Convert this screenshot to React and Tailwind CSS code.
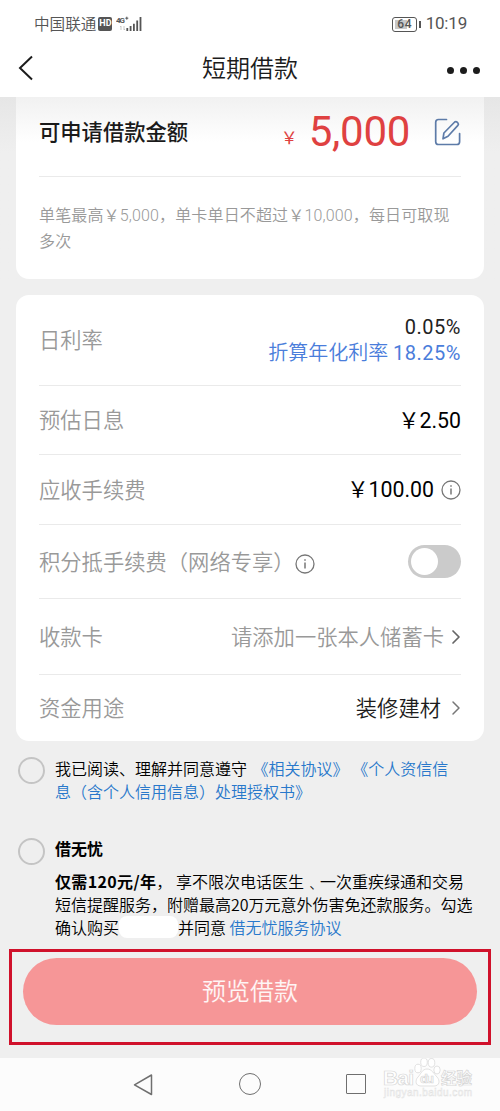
import { ChevronRight } from "lucide-react";

const StatusBar = () => (
  <div className="flex h-12 items-center justify-between pl-[34px] pr-[33px] text-[#555]">
    <div className="flex items-center">
      <span className="text-[15.6px] font-[350]">中国联通</span>
      <span className="ml-[2px] flex h-[14px] w-[14px] items-center justify-center rounded-[2px] bg-[#555] font-[Roboto] text-[9px] font-bold text-white">
        HD
      </span>
      <svg className="ml-1 h-4 w-[27px]" viewBox="0 0 27 16">
        <text x="0" y="7" fontSize="8" fontWeight="700" fontFamily="Roboto" fill="#555" textLength="9">4G</text>
        <path d="M10.8 .7v3M9.3 2.2h3" stroke="#555" strokeWidth="1" />
        <path d="M5 14v-4M4 11l1-1M8 10v4M9 13l-1 1" stroke="#bbb" strokeWidth=".8" fill="none" />
        <path d="M11.3 15v-3M14.6 15v-5M17.9 15V7.700M21.200 15V4.500M24.500 15V1" stroke="#555" strokeWidth="1.800" />
      </svg>
    </div>
    <div className="flex items-center">
      <div className="flex h-[15px] w-[25px] items-center justify-center rounded-[3px] border border-[#555] p-[2px]">
        <span className="flex h-full w-full items-center justify-center bg-gradient-to-r from-[#c8c8c8] from-65% to-white to-65% font-[Roboto] text-[12px] leading-none font-medium tracking-[0.5px]">
          64
        </span>
      </div>
      <span className="ml-[2px] h-[7px] w-[1.5px] bg-[#555]" />
      <span className="ml-[5px] font-[Roboto] text-[17px] tracking-[-0.2px]">10:19</span>
    </div>
  </div>
);

const Header = () => (
  <div className="flex h-[49px] items-center justify-between pl-[18px] pr-5 pb-[9px]">
    <svg className="h-[26px] w-4" viewBox="0 0 16 26" fill="none" stroke="#1c1c1c" strokeWidth="2">
      <path d="M14 1.500L2 13l12 11.500" />
    </svg>
    <h1 className="ml-[19px] pb-[3px] text-2xl leading-none font-[350] text-[#1c1c1c]">短期借款</h1>
    <div className="mt-[5px] flex gap-[6px]">
      <span className="h-[7px] w-[7px] rounded-full bg-[#1c1c1c]" />
      <span className="h-[7px] w-[7px] rounded-full bg-[#1c1c1c]" />
      <span className="h-[7px] w-[7px] rounded-full bg-[#1c1c1c]" />
    </div>
  </div>
);

const EditIcon = () => (
  <svg className="ml-6 h-7 w-[27px]" viewBox="0 0 27 28" fill="none" stroke="#5d7ba8" strokeWidth="1.7" strokeLinejoin="round" strokeLinecap="round">
    <path d="M12.500 1.500H4.500A2.800 2.800 0 0 0 1.700 4.300v19.400a2.800 2.800 0 0 0 2.800 2.800h18.300a2.800 2.800 0 0 0 2.800-2.800V15.500" />
    <path d="M9 20.800l.9-5.800L20.700 4q1.200-1 2.400.1l.8.900q1.100 1.200 0 2.400L14 18.200z" />
  </svg>
);

const InfoIcon = ({ className }) => (
  <svg className={className} viewBox="0 0 20 20" fill="none" stroke="#777" strokeWidth="1.3">
    <circle cx="10" cy="10" r="9" />
    <path d="M10 8.500v6M10 5.200v1.600" strokeWidth="1.500" />
  </svg>
);

const Row = ({ label, height, last, children }) => (
  <div className={`flex items-center justify-between ${height} ${last ? "" : "border-b border-[#eaeaea]"}`}>
    <div className="flex items-center pt-[2px] text-[21.3px] font-[350] text-[#999]">{label}</div>
    {children}
  </div>
);

const Watermark = () => (
  <svg className="absolute left-[132px] top-0 h-[42px] w-[92px]" viewBox="0 0 92 42" fontFamily="Liberation Sans, Noto Sans CJK SC, sans-serif" fontWeight="700" fill="#fff" stroke="#d6d6d6" strokeWidth=".7">
    <text x="0" y="27" fontSize="21" textLength="31">Bai</text>
    <ellipse cx="35" cy="10.5" rx="3.2" ry="4.3" />
    <ellipse cx="41" cy="4.2" rx="3.3" ry="4.3" />
    <ellipse cx="48.5" cy="4.8" rx="3.3" ry="4.3" />
    <ellipse cx="54" cy="12" rx="3.2" ry="4" />
    <path d="M44 11c-5 0-6 5-9 8s-3 9 3 9h13c6 0 6-6 3-9s-5-8-10-8z" />
    <text x="37" y="25" fontSize="13" textLength="14">du</text>
    <text x="58" y="25.500" fontSize="15.500" textLength="31">经验</text>
    <text x="1" y="38" fontSize="10" fontWeight="400" stroke="#e2e2e2" strokeWidth=".5" textLength="88">jingyan.baidu.com</text>
  </svg>
);

const App = () => {
  return (
    <div className="flex h-[1111px] w-[500px] flex-col overflow-hidden bg-[#efefef] font-['Noto_Sans_CJK_SC',sans-serif] text-black">
      <div className="h-[97px] bg-white">
        <StatusBar />
        <Header />
      </div>

      {/* amount */}
      <div className="h-[182px] bg-gradient-to-b from-[#e6e6e6] to-[#efefef] to-30% px-4">
        <div className="h-full rounded-b-[13px] bg-gradient-to-b from-[#f1f1f1] to-white to-25% px-[23px]">
          <div className="flex h-20 items-center border-b border-[#eaeaea] pb-[9px]">
            <span className="pb-[2px] text-[21.3px] font-medium text-[#1a1a1a]">可申请借款金额</span>
            <span className="ml-auto mt-[9px] text-[17px] leading-none text-[#df4141]">￥</span>
            <span className="ml-[11px] font-[Roboto] text-[42px] leading-none tracking-[-0.3px] text-[#df4141]">5,000</span>
            <EditIcon />
          </div>
          <p className="pt-[26px] font-[Roboto,'Noto_Sans_CJK_SC',sans-serif] text-base leading-[26px] font-[350] whitespace-nowrap tracking-[0.15px] text-[#999]">
            单笔最高￥5,000，单卡单日不超过￥10,000，每日可取现
            <br />
            多次
          </p>
        </div>
      </div>

      {/* loan details */}
      <div className="mx-4 mt-4 h-[446px] rounded-[13px] bg-white px-[23px] font-[Roboto,'Noto_Sans_CJK_SC',sans-serif]">
        <Row label="日利率" height="h-[91px]">
          <div className="pb-px text-right text-xl leading-[26px]">
            <div className="tracking-[0.5px] text-[#222]">0.05%</div>
            <div className="font-[350] text-[#4a7ddb]">
              折算年化利率 <span className="font-normal tracking-[0.5px]">18.25%</span>
            </div>
          </div>
        </Row>
        <Row label="预估日息" height="h-[69px]">
          <span className="pt-px text-[21.3px]">￥2.50</span>
        </Row>
        <Row label="应收手续费" height="h-[70px]">
          <div className="flex items-center">
            <span className="pt-px text-[21.3px]">￥100.00</span>
            <InfoIcon className="ml-[7px] h-5 w-5" />
          </div>
        </Row>
        <Row
          label={
            <>
              积分抵手续费（网络专享）
              <InfoIcon className="mt-[2px] h-5 w-5" />
            </>
          }
          height="h-[74px]"
        >
          <div className="flex h-[33px] w-[53px] items-center rounded-full bg-[#cbcbcb] pl-[3px]">
            <div className="h-[27px] w-[27px] rounded-full bg-white" />
          </div>
        </Row>
        <Row label="收款卡" height="h-[76px]">
          <div className="flex items-center">
            <span className="pt-[2px] text-[21.3px] font-[350] text-[#999]">请添加一张本人储蓄卡</span>
            <ChevronRight className="-mr-[7px] h-6 w-6 text-[#666]" strokeWidth={1.7} />
          </div>
        </Row>
        <Row label="资金用途" height="h-[66px]" last>
          <div className="flex items-center">
            <span className="mr-[3px] pt-px text-[21.3px] font-[350] text-[#1c1c1c]">装修建材</span>
            <ChevronRight className="-mr-[7px] h-6 w-6 text-[#777]" strokeWidth={1.5} />
          </div>
        </Row>
      </div>

      {/* agreements */}
      <div className="flex h-[78px] pl-[18px] pt-4">
        <span className="h-[27px] w-[27px] shrink-0 rounded-full border-2 border-[#c4c4c4]" />
        <p className="ml-[10px] whitespace-nowrap text-base leading-[23px] font-[350]">
          我已阅读、理解并同意遵守<span className="ml-[2px] text-[#2878cb]"> 《相关协议》 《个人资信信</span>
          <br />
          <span className="text-[#2878cb]">息（含个人信用信息）处理授权书》</span>
        </p>
      </div>
      <div className="flex h-[130px] pl-[18px] pt-[18px]">
        <span className="mt-px h-[27px] w-[27px] shrink-0 rounded-full border-2 border-[#c4c4c4]" />
        <div className="ml-[10px] whitespace-nowrap text-base leading-[23px] font-[350]">
          <p className="font-bold">借无忧</p>
          <p className="mt-[10px]">
            <span className="font-bold tracking-[0.35px]">仅需120元/年</span>， 享不限次电话医生﹑一次重疾绿通和交易
            <br />
            短信提醒服务，附赠最高20万元意外伤害免还款服务。勾选
            <br />
            确认购买
            <span className="inline-block h-[22px] w-[59px] rounded-[8px] bg-white align-top" />
            并同意 <span className="text-[#2878cb]">借无忧服务协议</span>
          </p>
        </div>
      </div>

      {/* submit */}
      <div className="ml-[9px] h-24 w-[482px] border-[3px] border-[#d0112b] px-[11px] pt-[6px]">
        <button className="h-[67px] w-[454px] rounded-full bg-[#f69697] pb-[3px] text-2xl font-[350] text-white/90">预览借款</button>
      </div>

      {/* system navigation */}
      <div className="mt-auto flex h-[53px] bg-[#fcfcfc] pt-[15px]">
        <svg className="ml-[132px] h-6 w-[22px]" viewBox="0 0 22 24" fill="none" stroke="#6f6f6f" strokeWidth="1.5" strokeLinejoin="round">
          <path d="M19.500 2v19.500L2.500 11.800z" />
        </svg>
        <span className="ml-[85px] h-[22px] w-[22px] rounded-full border-[1.5px] border-[#6f6f6f]" />
        <div className="relative -mt-[15px] ml-[85px] pt-4">
          <span className="block h-5 w-5 rounded-[1px] border-[1.5px] border-[#6f6f6f]" />
          <div className="absolute -left-[95px] top-0 w-0">
            <Watermark />
          </div>
        </div>
      </div>
    </div>
  );
};

export default App;
